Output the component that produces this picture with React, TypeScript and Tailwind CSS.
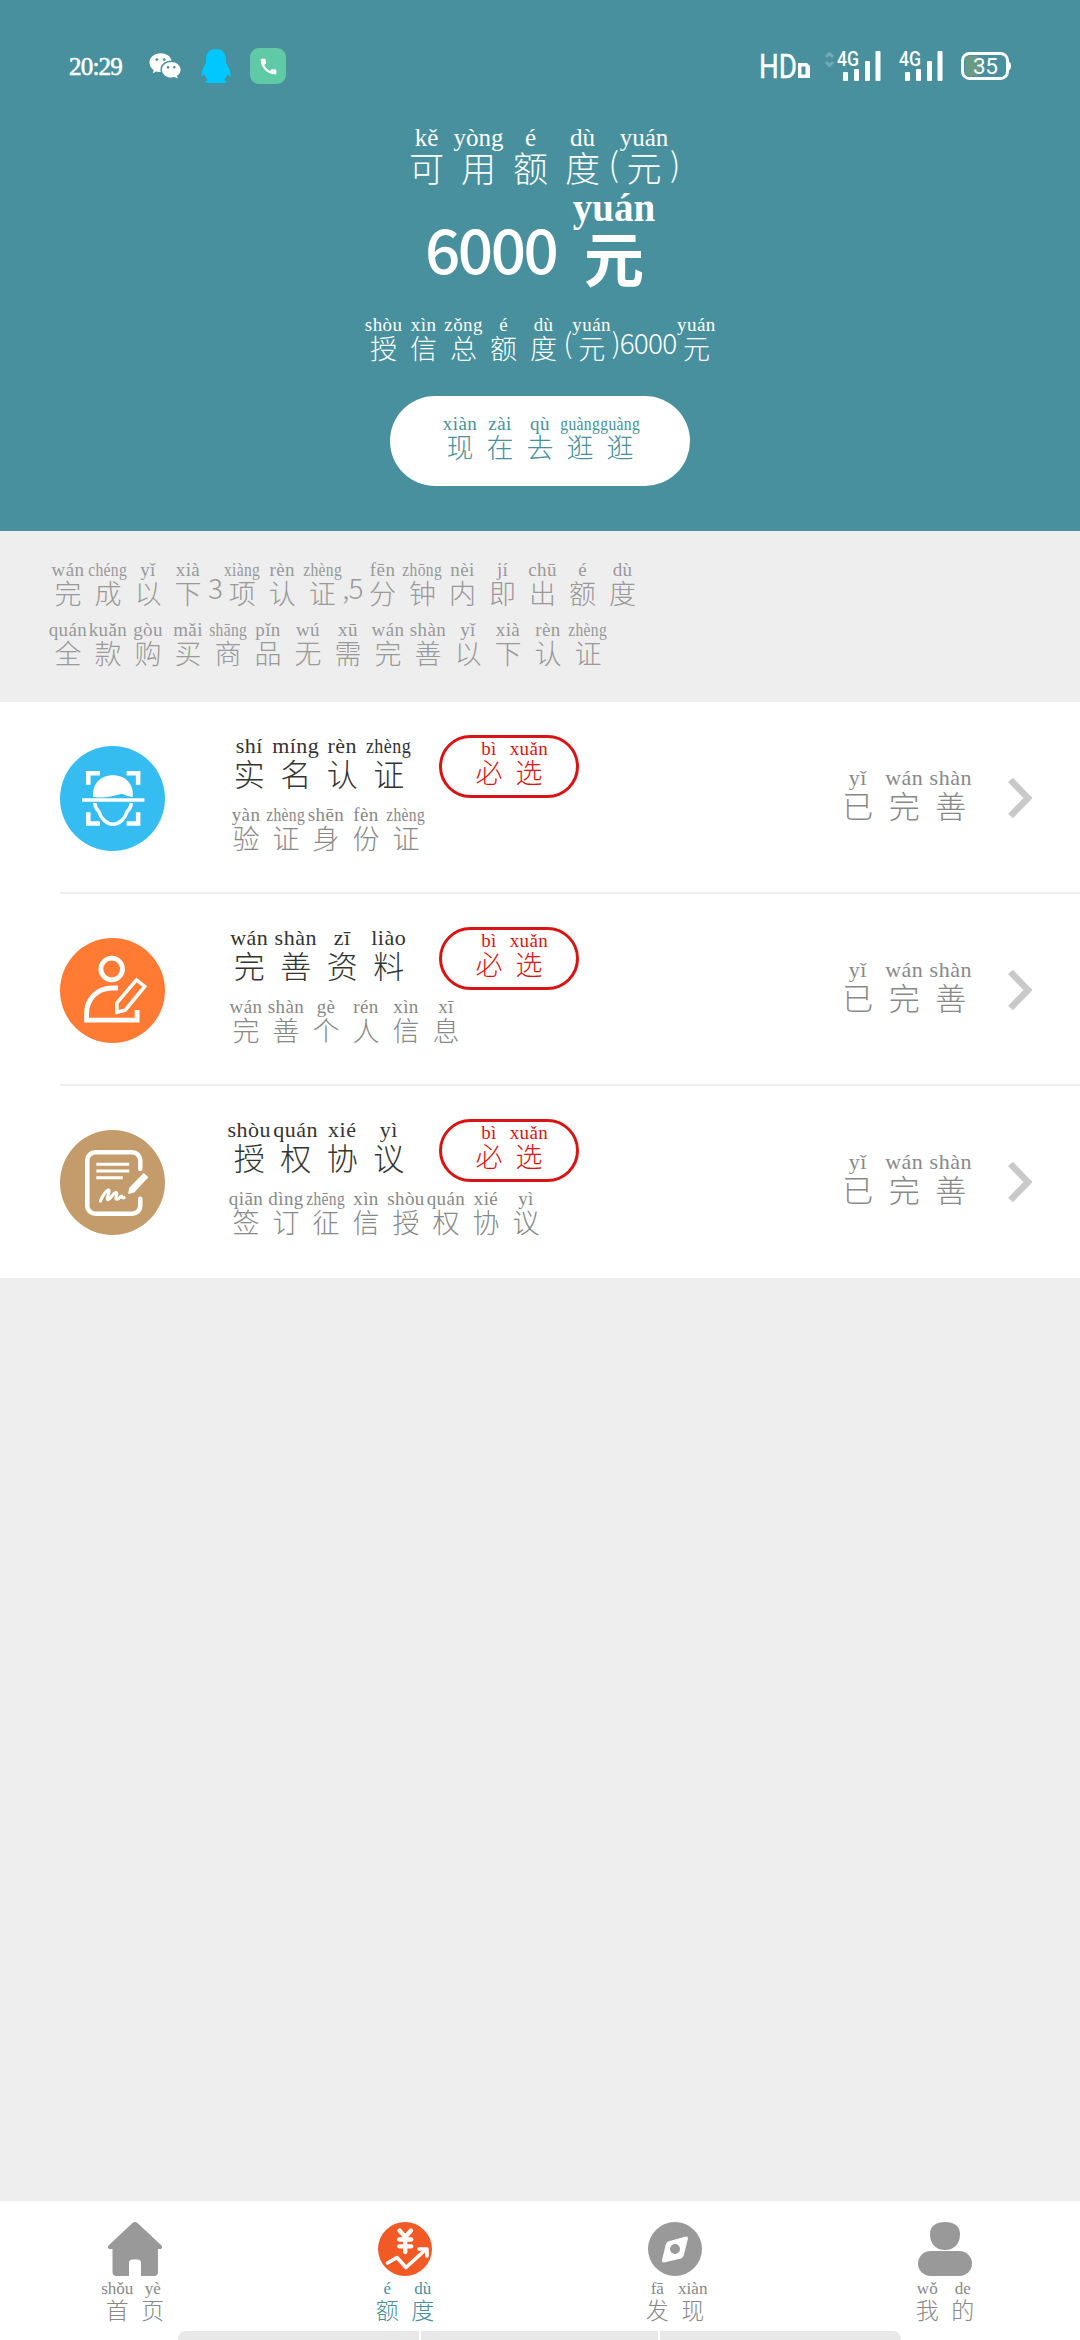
import { ReactNode } from "react";
import clsx from "clsx";
import { RiWechatFill } from "react-icons/ri";
import { MdCall } from "react-icons/md";

type Size = "xs" | "sm" | "md" | "lg";
// [hanzi, pinyin] or a plain string for digits and punctuation
type Token = [string, string] | string;

const sizes: Record<Size, { cell: string; pinyin: string; hanzi: string; plain: string }> = {
  xs: {
    cell: "w-[35.5px]",
    pinyin: "h-[17px] text-[17px] leading-[18px]",
    hanzi: "h-6 text-[23px] leading-6",
    plain: "text-[24px]",
  },
  sm: {
    cell: "w-10",
    pinyin: "h-[19px] text-[19px] leading-[17px] tracking-[0.4px]",
    hanzi: "h-[26px] text-[27px] leading-[26px]",
    plain: "pt-[10px] text-[28px] leading-[32px] tracking-[-0.8px]",
  },
  md: {
    cell: "w-[46.5px]",
    pinyin: "h-[23px] text-[22px] leading-[22px] tracking-[0.5px]",
    hanzi: "h-[30px] text-[31px] leading-[30px]",
    plain: "text-[34px]",
  },
  lg: {
    cell: "w-[52px]",
    pinyin: "h-6 text-[25px] leading-6",
    hanzi: "h-[34px] text-[35px] leading-[34px]",
    plain: "pt-[17px] text-[33px] leading-[40px] tracking-[-1px]",
  },
};

const Pinyin = ({ tokens, size = "sm", className }: { tokens: Token[]; size?: Size; className?: string }) => {
  const s = sizes[size];
  return (
    <div className={clsx("flex items-start", className)}>
      {tokens.map((token, i) =>
        typeof token === "string" ? (
          <span key={i} className={clsx("whitespace-nowrap font-['Noto_Sans_CJK_SC',sans-serif] font-light", s.plain)}>
            {token}
          </span>
        ) : (
          <span key={i} className={clsx("flex shrink-0 flex-col items-center", s.cell)}>
            <span className={clsx("whitespace-nowrap", s.pinyin, token[1].length > 4 && "scale-x-[0.82]")}>
              {token[1]}
            </span>
            <span className={clsx("font-['Noto_Sans_CJK_SC',sans-serif] font-light", s.hanzi)}>{token[0]}</span>
          </span>
        )
      )}
    </div>
  );
};

const Signal = () => (
  <div className="flex h-8 items-start text-white">
    <svg className="overflow-visible" width="43" height="32" viewBox="0 0 43 32" fill="#fff">
      <text x="0" y="16" fontSize="20" textLength="22" lengthAdjust="spacingAndGlyphs" fontFamily="Roboto, sans-serif" fontWeight="500">
        4G
      </text>
      <rect x="6" y="22" width="5" height="9" rx="1" />
      <rect x="17" y="19" width="5" height="12" rx="1" />
      <rect x="28" y="11" width="5" height="20" rx="1" />
      <rect x="38.500" y="1" width="5" height="30" rx="1" />
    </svg>
  </div>
);

const StatusBar = () => (
  <div className="flex h-[126px] items-start pl-[69px] pr-[69px] pt-12">
    <span className="w-[78px] pt-[7px] text-[25px] leading-6 tracking-[-0.8px] [-webkit-text-stroke:0.6px_white]">
      20:29
    </span>
    <RiWechatFill className="mt-[1px] h-[34px] w-[36px]" />
    <svg className="ml-[18px] mt-[1px]" width="30" height="34" viewBox="0 0 30 34" fill="#00c8ff">
      <path d="M15 0C8.800 0 5 4.500 5 10v3.500C3 17.500 0 22.500 .5 26.500c.2 1.800 1.500 1.200 3.200-1.500.6 2.600 1.700 4.600 3.300 6.200-1.500.5-2.700 1.200-2.700 1.900 0 .6 1.500.9 5 .9h11.400c3.500 0 5-.3 5-.9 0-.7-1.200-1.400-2.700-1.900 1.600-1.600 2.700-3.600 3.300-6.200 1.700 2.700 3 3.300 3.200 1.500C30 22.500 27 17.500 25 13.500V10C25 4.500 21.200 0 15 0Z" />
    </svg>
    <div className="ml-[19px] flex size-9 items-center justify-center rounded-[9px] bg-[#60c9a6]">
      <MdCall className="size-[21px]" />
    </div>
    <div className="ml-auto flex">
      <svg className="overflow-visible" width="50" height="32" viewBox="0 0 50 32" fill="#fff">
        <text x="-1" y="30" fontSize="33" textLength="38" lengthAdjust="spacingAndGlyphs" fontFamily="Roboto, sans-serif" stroke="#fff" strokeWidth="0.400">
          HD
        </text>
        <path fillRule="evenodd" d="M38 15h9l3 3v12H38ZM41.500 18.500v8h4v-8Z" />
      </svg>
      <svg className="ml-[15px]" width="9" height="20" viewBox="0 0 9 20" fill="none" stroke="#76aab4" strokeWidth="2.800">
        <path d="m1 9 3.500-3.500L8 9M1 14l3.500 3.500L8 14" />
      </svg>
      <div className="ml-[3px] mt-[2px]">
        <Signal />
      </div>
      <div className="ml-[19px] mt-[2px]">
        <Signal />
      </div>
      <svg className="ml-[19px] mt-1" width="50" height="28" viewBox="0 0 50 28">
        <rect x="4" y="4" width="15" height="20" rx="4" fill="#6a9a86" />
        <rect x="1.500" y="1.500" width="45" height="25" rx="7" fill="none" stroke="#fff" strokeWidth="3" />
        <path d="M47 9.500c2 .5 3 1.500 3 4.500s-1 4-3 4.500Z" fill="#fff" />
        <text x="12" y="21.500" fontSize="22.500" fontFamily="Roboto, sans-serif" fill="#fff" textLength="25">
          35
        </text>
      </svg>
    </div>
  </div>
);

const FaceIcon = () => (
  <svg width="105" height="105" viewBox="0 0 104 104" fill="none" stroke="#fff" strokeWidth="4.500">
    <circle cx="52" cy="52" r="52" fill="#35bdf2" stroke="none" />
    <path d="M28 38.500V27h11.500M66 27h11.400v11.500M28 65.500v11.200h11.500M66 76.700h11.400V65.500" />
    <path d="M33 50.500C31.500 38 40 29 52.500 29S73.500 38 72 50.500c-4-.3-7-2-11-3.300-9 2.800-19 4.500-28 3.300Z" fill="#fff" stroke="none" />
    <path d="M21.800 53.500h61.800" strokeWidth="3.600" />
    <path d="M34.500 56.500c0 4 1.500 6 4 8.500 2 7 8 12.500 14 12.500s12-5.500 14-12.500c2.500-2.500 4-4.500 4-8.500" strokeWidth="3.500" />
  </svg>
);

const PersonIcon = () => (
  <svg width="105" height="105" viewBox="0 0 104 104" fill="none" stroke="#fff" strokeWidth="4.800">
    <circle cx="52" cy="52" r="52" fill="#ff7a33" stroke="none" />
    <circle cx="51.200" cy="30.700" r="10.700" />
    <path d="M57.500 49.500H52C37 49.500 26.300 60 26.300 75v6.300h50.100v-10" />
    <path d="m56.500 73.500-.3-9L75.700 41.500l8.200 6.500-19.300 23.500Z" strokeWidth="3.500" />
  </svg>
);

const ContractIcon = () => (
  <svg width="105" height="105" viewBox="0 0 104 104" fill="none" stroke="#fff" strokeWidth="4.500" strokeLinecap="round">
    <circle cx="52" cy="52" r="52" fill="#c49c6b" stroke="none" />
    <path d="M79.500 38.500V30a8 8 0 0 0-8-8H35a8 8 0 0 0-8 8v45a8 8 0 0 0 8 8h36.500a8 8 0 0 0 8-8v-7" />
    <path d="M36 34h32.600M36 40.700h32.600M36 47.300h26.200" strokeWidth="3" strokeLinecap="butt" />
    <path d="M40 70.500c2-5 6-11 8-11 2.500 0-3 9.500-.5 9.500 2 0 5.500-7 8-7 2.300 0-2 6.500 1 6.500 2 0 3-3 4.500-3 1 0 0 2.500 2.500 1.500" strokeWidth="3" strokeLinejoin="round" />
    <path d="m67.500 63.500 1.100-6.200 14.300-14.600 4.600 4-14 15.300Z" fill="#fff" stroke="none" />
  </svg>
);

const HomeIcon = () => (
  <svg width="54" height="54" viewBox="0 0 54 54" fill="#999">
    <path d="M24.500 1q2.500-2 5 0L53 23c2 2 1 4-1 4h-2v23q0 4-4 4H33V41q0-3.500-3.500-3.500h-5Q21 37.500 21 41v13H8.500q-4 0-4-4V27H2c-2 0-3-2-1-4Z" />
  </svg>
);

const QuotaIcon = () => (
  <svg width="54" height="54" viewBox="0 0 54 54" fill="none" stroke="#fff" strokeWidth="4.300" strokeLinecap="round" strokeLinejoin="round">
    <circle cx="27" cy="27" r="27" fill="#f15a24" stroke="none" />
    <path d="m21.500 8.500 5.800 6.500L33 8.500M27.300 15v15M21.300 17.500h12M21.300 24.300h12" />
    <path d="M9.500 41 19 35.500l9 10 17-15.500" strokeWidth="3.600" />
    <path d="M41 27h8v7" strokeWidth="3.600" />
    <path d="m42 27 7 6V27Z" fill="#fff" stroke="none" />
  </svg>
);

const CompassIcon = () => (
  <svg width="54" height="54" viewBox="0 0 54 54">
    <circle cx="27" cy="27" r="27" fill="#999" />
    <path d="m20 20 18-5q2-.3 1.500 1.700L35 34q-.5 1.500-2 2l-17 4q-2 .3-1.500-1.700L18.500 21.500q.3-1 1.500-1.500Z" fill="#fff" stroke="#fff" />
    <circle cx="27" cy="27" r="5" fill="#999" />
  </svg>
);

const UserIcon = () => (
  <svg width="54" height="54" viewBox="0 0 54 54" fill="#999">
    <path d="M27 0c9 0 15 4 15 12 0 10-6 16-15 16S12 22 12 12C12 4 18 0 27 0Z" />
    <rect y="29" width="54" height="25" rx="12.500" />
  </svg>
);

const items: { icon: ReactNode; title: Token[]; desc: Token[] }[] = [
  {
    icon: <FaceIcon />,
    title: [["实", "shí"], ["名", "míng"], ["认", "rèn"], ["证", "zhèng"]],
    desc: [["验", "yàn"], ["证", "zhèng"], ["身", "shēn"], ["份", "fèn"], ["证", "zhèng"]],
  },
  {
    icon: <PersonIcon />,
    title: [["完", "wán"], ["善", "shàn"], ["资", "zī"], ["料", "liào"]],
    desc: [["完", "wán"], ["善", "shàn"], ["个", "gè"], ["人", "rén"], ["信", "xìn"], ["息", "xī"]],
  },
  {
    icon: <ContractIcon />,
    title: [["授", "shòu"], ["权", "quán"], ["协", "xié"], ["议", "yì"]],
    desc: [
      ["签", "qiān"], ["订", "dìng"], ["征", "zhēng"], ["信", "xìn"],
      ["授", "shòu"], ["权", "quán"], ["协", "xié"], ["议", "yì"],
    ],
  },
];

const tabs: { icon: ReactNode; label: Token[]; active?: boolean }[] = [
  { icon: <HomeIcon />, label: [["首", "shǒu"], ["页", "yè"]] },
  { icon: <QuotaIcon />, label: [["额", "é"], ["度", "dù"]], active: true },
  { icon: <CompassIcon />, label: [["发", "fā"], ["现", "xiàn"]] },
  { icon: <UserIcon />, label: [["我", "wǒ"], ["的", "de"]] },
];

const App = () => {
  return (
    <div className="relative flex h-[2340px] w-[1080px] flex-col overflow-hidden bg-[#eeeeee] font-['Liberation_Serif','Noto_Sans_CJK_SC',serif]">
      <header className="h-[531px] bg-[#48909d] text-white">
        <StatusBar />
        <div className="flex flex-col items-center">
          <Pinyin
            size="lg"
            className="h-[58px]"
            tokens={[["可", "kě"], ["用", "yòng"], ["额", "é"], ["度", "dù"], "(", ["元", "yuán"], ")"]}
          />
          <div className="mt-1 flex h-24 gap-5">
            <span className="w-[128px] pt-[29px] font-['Noto_Sans_CJK_SC',sans-serif] text-[62px] font-medium leading-[60px] tracking-[-2.5px]">
              6000
            </span>
            <span className="flex w-[82px] flex-col items-center font-bold">
              <span className="h-10 text-[39px] leading-10">yuán</span>
              <span className="h-14 font-['Noto_Sans_CJK_SC',sans-serif] text-[60px] leading-[56px]">元</span>
            </span>
          </div>
          <Pinyin
            className="mt-8 h-11"
            tokens={[
              ["授", "shòu"], ["信", "xìn"], ["总", "zǒng"], ["额", "é"], ["度", "dù"],
              "(", ["元", "yuán"], ")6000", ["元", "yuán"],
            ]}
          />
          <button className="mt-9 flex h-[90px] w-[300px] justify-center rounded-full bg-white pt-[19px] text-[#48909d]">
            <Pinyin tokens={[["现", "xiàn"], ["在", "zài"], ["去", "qù"], ["逛", "guàng"], ["逛", "guàng"]]} />
          </button>
        </div>
      </header>

      <section className="flex h-[171px] flex-col gap-4 pl-12 pt-[30px] text-[#999]">
        <Pinyin
          className="h-11"
          tokens={[
            ["完", "wán"], ["成", "chéng"], ["以", "yǐ"], ["下", "xià"], "3",
            ["项", "xiàng"], ["认", "rèn"], ["证", "zhèng"], ",5",
            ["分", "fēn"], ["钟", "zhōng"], ["内", "nèi"], ["即", "jí"], ["出", "chū"], ["额", "é"], ["度", "dù"],
          ]}
        />
        <Pinyin
          className="h-11"
          tokens={[
            ["全", "quán"], ["款", "kuǎn"], ["购", "gòu"], ["买", "mǎi"], ["商", "shāng"], ["品", "pǐn"], ["无", "wú"],
            ["需", "xū"], ["完", "wán"], ["善", "shàn"], ["以", "yǐ"], ["下", "xià"], ["认", "rèn"], ["证", "zhèng"],
          ]}
        />
      </section>

      <ul className="bg-white pl-[60px]">
        {items.map((item, i) => (
          <li
            key={i}
            className={clsx("flex h-48 items-start", i < items.length - 1 && "border-b-2 border-[#eeeeee]")}
          >
            <div className="mt-[43.500px] w-[166px]">{item.icon}</div>
            <div className="w-[213px] pt-[33px]">
              <Pinyin size="md" tokens={item.title} className="text-[#333]" />
              <Pinyin tokens={item.desc} className="mt-[18px] text-[#888]" />
            </div>
            <div className="mt-[33px] flex h-[63px] w-[140px] justify-center rounded-full border-[3px] border-[#d81414] pt-[2px] text-[#d81414]">
              <Pinyin tokens={[["必", "bì"], ["选", "xuǎn"]]} />
            </div>
            <Pinyin
              size="md"
              className="ml-auto mt-[65px] text-[#888]"
              tokens={[["已", "yǐ"], ["完", "wán"], ["善", "shàn"]]}
            />
            <svg className="ml-[34px] mr-12 mt-[76px]" width="24" height="40" viewBox="0 0 24 40" fill="none" stroke="#c9c9c9" strokeWidth="6.500">
              <path d="m2.500 2 17.500 18L2.500 38" />
            </svg>
          </li>
        ))}
      </ul>

      <nav className="mt-auto grid h-[139px] grid-cols-4 bg-white">
        {tabs.map((tab, i) => (
          <div key={i} className={clsx("flex flex-col items-center pt-[21px]", tab.active ? "text-[#48909d]" : "text-[#888]")}>
            {tab.icon}
            <Pinyin size="xs" tokens={tab.label} className="mt-1" />
          </div>
        ))}
      </nav>

      {/* gesture handles, cut off by the screen edge */}
      <div className="absolute bottom-0 left-[178px] flex h-[9px] w-[723px] gap-[2px]">
        <span className="w-[241px] rounded-tl-[8px] bg-[#e8e8e8]" />
        <span className="w-[237px] bg-[#e8e8e8]" />
        <span className="w-[241px] rounded-tr-[8px] bg-[#e8e8e8]" />
      </div>
    </div>
  );
};

export default App;
